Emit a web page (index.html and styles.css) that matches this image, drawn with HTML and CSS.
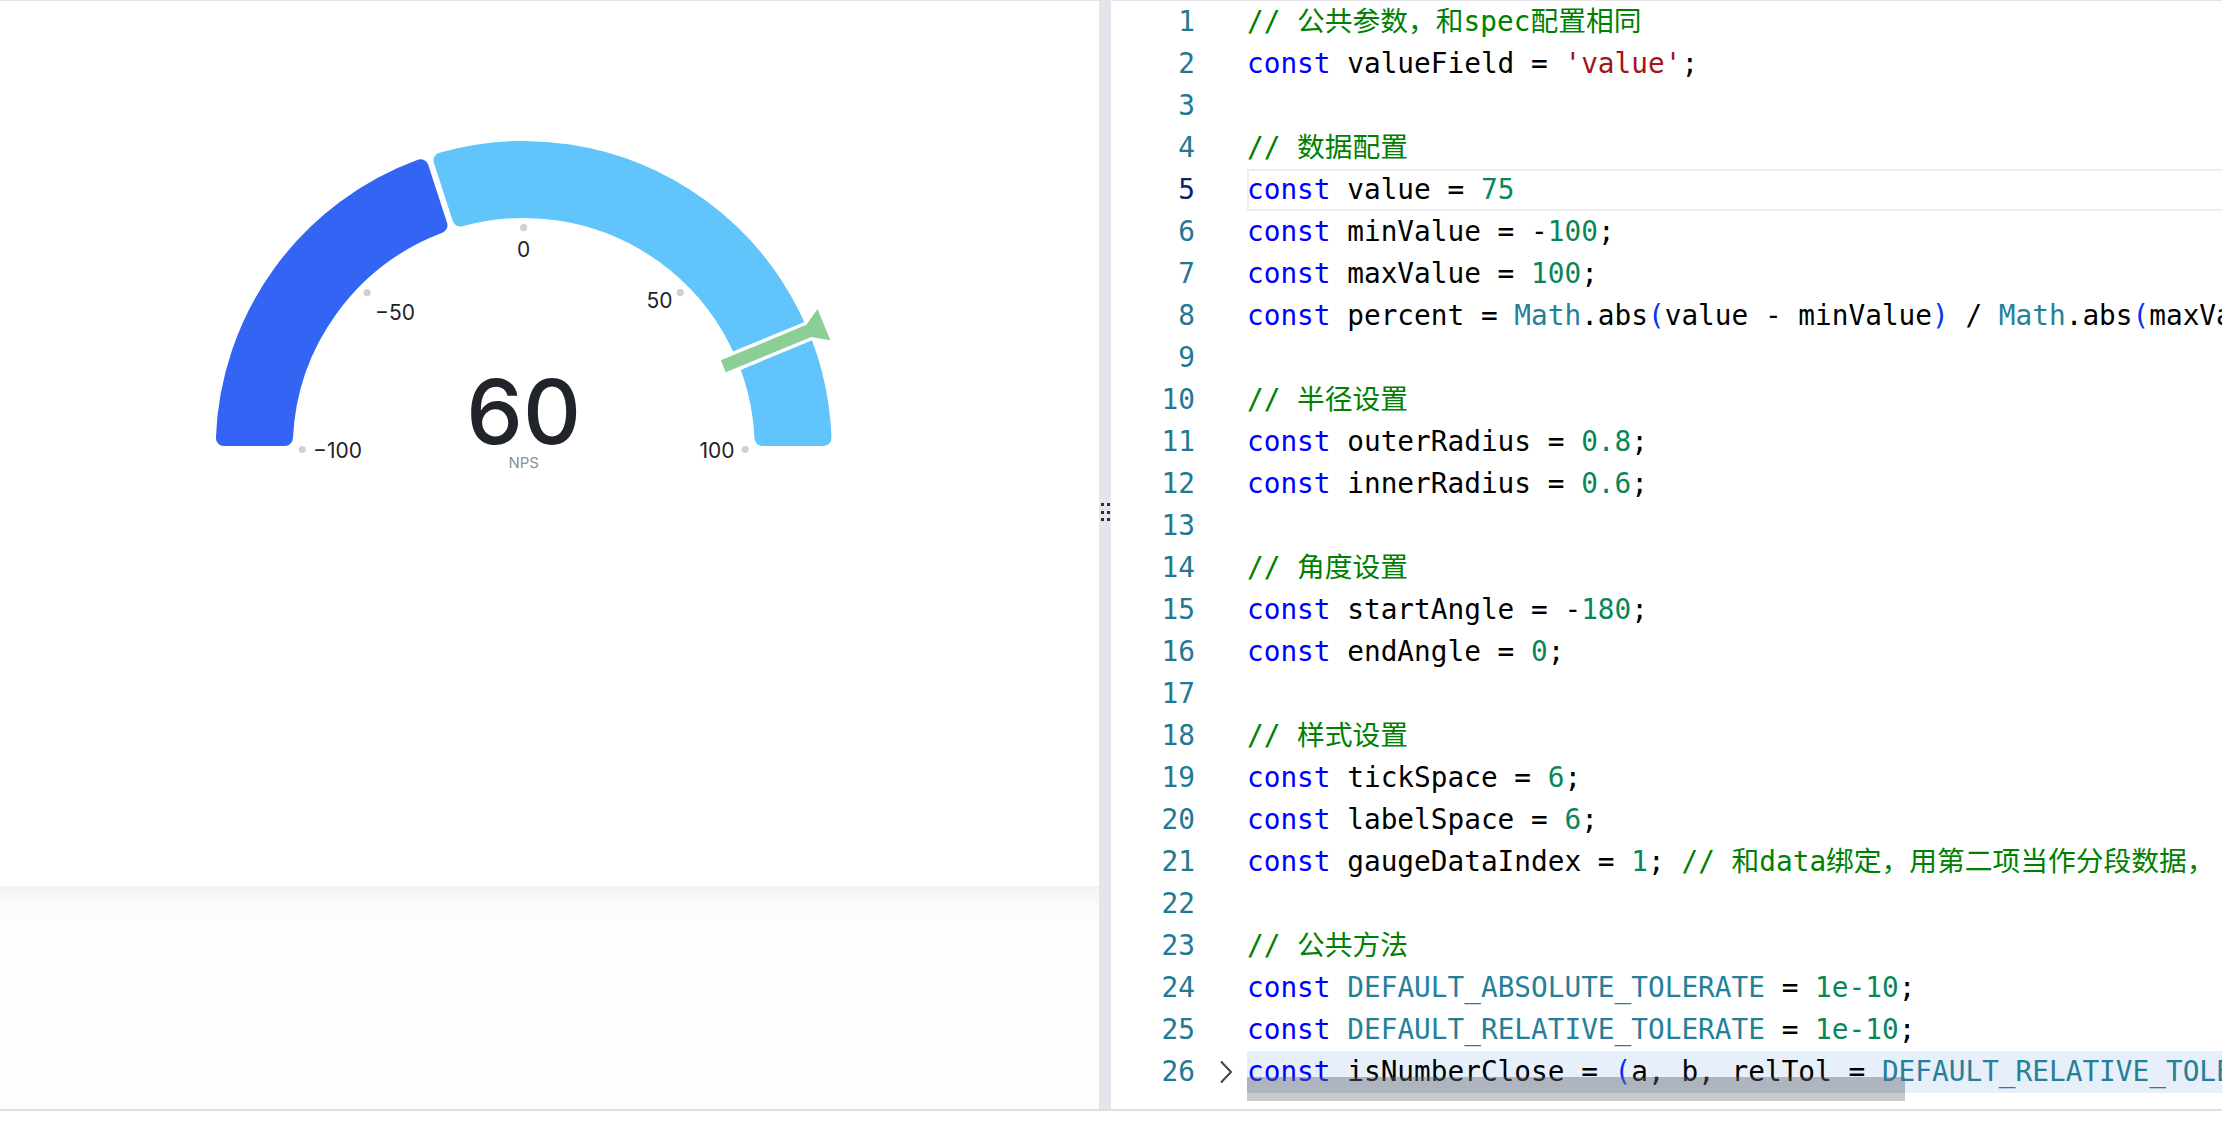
FILE: index.html
```html
<!DOCTYPE html>
<html lang="zh-CN">
<head>
<meta charset="utf-8">
<title>Gauge</title>
<link rel="stylesheet" href="styles.css">
</head>
<body>
<div class="app">
  <div class="workspace">
    <section class="preview">
      <div class="chart">
        <svg class="gauge" viewBox="0 1 1099 885" width="1099" height="885" xmlns="http://www.w3.org/2000/svg">
          <path class="seg seg-low" d="M223.90 438.00 A300 300 0 0 1 420.59 167.28 L439.46 225.34 A239 239 0 0 0 284.95 438.00 Z"/>
          <path class="seg seg-high" d="M441.52 160.47 A300 300 0 0 1 823.50 438.00 L762.45 438.00 A239 239 0 0 0 460.39 218.54 Z"/>
          <circle class="tick" cx="302.2" cy="449.5" r="3.6"/>
          <circle class="tick" cx="367.1" cy="292.6" r="3.6"/>
          <circle class="tick" cx="523.7" cy="227.6" r="3.6"/>
          <circle class="tick" cx="680.3" cy="292.6" r="3.6"/>
          <circle class="tick" cx="745.2" cy="449.5" r="3.6"/>
          <text class="lbl" x="313" y="457.6">−100</text>
          <text class="lbl" x="375" y="320">−50</text>
          <text class="lbl mid" x="523.7" y="256.6">0</text>
          <text class="lbl end" x="672.5" y="308.2">50</text>
          <text class="lbl end" x="734.5" y="457.6">100</text>
          <polygon class="pointer" points="720.77,360.33 806.41,324.86 817.53,309.11 830.39,340.15 811.39,336.88 725.75,372.35"/>
          <text class="value" x="523.7" y="444">60</text>
          <text class="unit" x="523.7" y="468">NPS</text>
        </svg>
      </div>
      <div class="console"></div>
    </section>
    <div class="splitter">
      <div class="grip"><i></i><i></i><i></i><i></i><i></i><i></i></div>
    </div>
    <section class="editor">
      <div class="lines">
        <div class="line"><span class="ln">1</span><span class="fold"></span><span class="code"><span class="c">// 公共参数，和spec配置相同</span></span></div>
        <div class="line"><span class="ln">2</span><span class="fold"></span><span class="code"><span class="k">const</span> valueField = <span class="s">'value'</span>;</span></div>
        <div class="line"><span class="ln">3</span><span class="fold"></span><span class="code"></span></div>
        <div class="line"><span class="ln">4</span><span class="fold"></span><span class="code"><span class="c">// 数据配置</span></span></div>
        <div class="line"><span class="ln active">5</span><span class="fold"></span><span class="code current"><span class="k">const</span> value = <span class="n">75</span></span></div>
        <div class="line"><span class="ln">6</span><span class="fold"></span><span class="code"><span class="k">const</span> minValue = -<span class="n">100</span>;</span></div>
        <div class="line"><span class="ln">7</span><span class="fold"></span><span class="code"><span class="k">const</span> maxValue = <span class="n">100</span>;</span></div>
        <div class="line"><span class="ln">8</span><span class="fold"></span><span class="code"><span class="k">const</span> percent = <span class="t">Math</span>.abs<span class="b">(</span>value - minValue<span class="b">)</span> / <span class="t">Math</span>.abs<span class="b">(</span>maxValue - minValue<span class="b">)</span>;</span></div>
        <div class="line"><span class="ln">9</span><span class="fold"></span><span class="code"></span></div>
        <div class="line"><span class="ln">10</span><span class="fold"></span><span class="code"><span class="c">// 半径设置</span></span></div>
        <div class="line"><span class="ln">11</span><span class="fold"></span><span class="code"><span class="k">const</span> outerRadius = <span class="n">0.8</span>;</span></div>
        <div class="line"><span class="ln">12</span><span class="fold"></span><span class="code"><span class="k">const</span> innerRadius = <span class="n">0.6</span>;</span></div>
        <div class="line"><span class="ln">13</span><span class="fold"></span><span class="code"></span></div>
        <div class="line"><span class="ln">14</span><span class="fold"></span><span class="code"><span class="c">// 角度设置</span></span></div>
        <div class="line"><span class="ln">15</span><span class="fold"></span><span class="code"><span class="k">const</span> startAngle = -<span class="n">180</span>;</span></div>
        <div class="line"><span class="ln">16</span><span class="fold"></span><span class="code"><span class="k">const</span> endAngle = <span class="n">0</span>;</span></div>
        <div class="line"><span class="ln">17</span><span class="fold"></span><span class="code"></span></div>
        <div class="line"><span class="ln">18</span><span class="fold"></span><span class="code"><span class="c">// 样式设置</span></span></div>
        <div class="line"><span class="ln">19</span><span class="fold"></span><span class="code"><span class="k">const</span> tickSpace = <span class="n">6</span>;</span></div>
        <div class="line"><span class="ln">20</span><span class="fold"></span><span class="code"><span class="k">const</span> labelSpace = <span class="n">6</span>;</span></div>
        <div class="line"><span class="ln">21</span><span class="fold"></span><span class="code"><span class="k">const</span> gaugeDataIndex = <span class="n">1</span>; <span class="c">// 和data绑定，用第二项当作分段数据，</span></span></div>
        <div class="line"><span class="ln">22</span><span class="fold"></span><span class="code"></span></div>
        <div class="line"><span class="ln">23</span><span class="fold"></span><span class="code"><span class="c">// 公共方法</span></span></div>
        <div class="line"><span class="ln">24</span><span class="fold"></span><span class="code"><span class="k">const</span> <span class="t">DEFAULT_ABSOLUTE_TOLERATE</span> = <span class="n">1e-10</span>;</span></div>
        <div class="line"><span class="ln">25</span><span class="fold"></span><span class="code"><span class="k">const</span> <span class="t">DEFAULT_RELATIVE_TOLERATE</span> = <span class="n">1e-10</span>;</span></div>
        <div class="line"><span class="ln">26</span><span class="fold"><svg class="chev" viewBox="0 0 14 24" width="14" height="24"><path d="M2 1.5 L12 12 L2 22.5"/></svg></span><span class="code selected"><span class="k">const</span> isNumberClose = <span class="b">(</span>a, b, relTol = <span class="t">DEFAULT_RELATIVE_TOLERATE</span>, absTol = <span class="t">DEFAULT_ABSOLUTE_TOLERATE</span><span class="b">)</span> =&gt; <span class="b">{</span></span></div>
      </div>
      <div class="hscroll"></div>
    </section>
  </div>
  <div class="footer"></div>
</div>
</body>
</html>
```

FILE: styles.css
```css
html, body {
  margin: 0;
  padding: 0;
  background: #ffffff;
}

body {
  width: 2222px;
  height: 1148px;
  overflow: hidden;
  font-family: Inter, "Noto Sans", sans-serif;
}

.app {
  display: flex;
  flex-direction: column;
  height: 1148px;
}

.workspace {
  display: flex;
  height: 1108px;
  border-top: 1px solid #e3e3e8;
  border-bottom: 2px solid #dddde2;
  flex: none;
}

.footer {
  flex: 1;
  background: #ffffff;
}

/* ---------- preview ---------- */
.preview {
  width: 1099px;
  flex: none;
  display: flex;
  flex-direction: column;
  background: #ffffff;
}

.chart {
  height: 885px;
  flex: none;
}

.gauge {
  display: block;
}

.console {
  flex: 1;
  background: linear-gradient(#f3f3f3 0px, #fafafa 18px, #fdfdfd 40px, #fdfdfd 100%);
}

.seg {
  stroke-width: 16;
  stroke-linejoin: round;
}

.seg-low {
  fill: #3364f4;
  stroke: #3364f4;
}

.seg-high {
  fill: #61c4fa;
  stroke: #61c4fa;
}

.tick {
  fill: #d0d0d3;
}

.lbl {
  font-family: Inter, "Noto Sans", sans-serif;
  font-size: 21px;
  fill: #1f2329;
}

.lbl.mid {
  text-anchor: middle;
}

.lbl.end {
  text-anchor: end;
}

.pointer {
  fill: #8bcf97;
  stroke: #ffffff;
  stroke-width: 7;
  paint-order: stroke;
  stroke-linejoin: miter;
}

.value {
  font-family: Inter, "Noto Sans", sans-serif;
  font-size: 90px;
  font-weight: 500;
  fill: #21242b;
  text-anchor: middle;
}

.unit {
  font-family: Inter, "Noto Sans", sans-serif;
  font-size: 15px;
  fill: #8b8f98;
  text-anchor: middle;
}

/* ---------- splitter ---------- */
.splitter {
  width: 12px;
  flex: none;
  background: #e4e4eb;
  display: flex;
  justify-content: center;
  align-items: flex-start;
  padding-top: 502px;
  box-sizing: border-box;
}

.grip {
  display: grid;
  grid-template-columns: 3px 3px;
  column-gap: 3px;
  row-gap: 4.5px;
}

.grip i {
  display: block;
  width: 3px;
  height: 3px;
  background: #2e2e33;
}

/* ---------- editor ---------- */
.editor {
  flex: 1;
  position: relative;
  overflow: hidden;
  background: #ffffff;
}

.lines {
  display: flex;
  flex-direction: column;
}

.line {
  display: grid;
  grid-template-columns: 84px 52px 1fr;
  height: 42px;
  line-height: 42px;
  font-family: "DejaVu Sans Mono", "Noto Sans CJK SC", monospace;
  font-size: 27.75px;
  color: #000000;
}

.ln {
  text-align: right;
  color: #237893;
}

.ln.active {
  color: #0b216f;
}

.fold {
  display: flex;
  align-items: center;
  padding-left: 24px;
}

.chev {
  display: block;
}

.chev path {
  fill: none;
  stroke: #424242;
  stroke-width: 2;
}

.code {
  white-space: pre;
  overflow: hidden;
}

.code.current {
  box-shadow: inset 2px 0 0 #eeeeee, inset 0 2px 0 #eeeeee, inset 0 -2px 0 #eeeeee;
}

.code.selected {
  background: #e6effa;
}

.k { color: #0000ff; }
.c { color: #008000; }
.s { color: #a31515; }
.n { color: #098658; }
.t { color: #267f99; }
.b { color: #0431fa; }

.hscroll {
  position: absolute;
  left: 136px;
  top: 1076px;
  width: 658px;
  height: 24px;
  background: linear-gradient(rgba(96, 100, 110, 0.42) 0px, rgba(96, 100, 110, 0.42) 16px, rgba(100, 100, 100, 0.34) 16px, rgba(100, 100, 100, 0.34) 100%);
}
```
